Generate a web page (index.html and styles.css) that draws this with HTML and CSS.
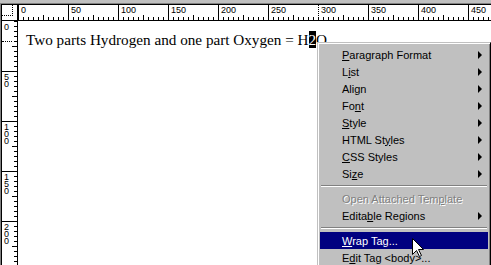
FILE: index.html
```html
<!DOCTYPE html>
<html>
<head>
  <title>Untitled Document</title>
  <link rel="stylesheet" href="styles.css">
</head>
<body>

  <div class="window">
    <div class="doc">
      <div class="client">

        <div class="hruler">
          <div class="corner"><span class="origin"></span></div>
          <div class="scale">
            <span class="major">0</span>
            <span class="major">50</span>
            <span class="major">100</span>
            <span class="major">150</span>
            <span class="major">200</span>
            <span class="major">250</span>
            <span class="major mark">300</span>
            <span class="major">350</span>
            <span class="major">400</span>
            <span class="major">450</span>
          </div>
        </div>

        <div class="main">
          <div class="vruler">
            <span class="vmajor"><span class="vlabel">0</span></span>
            <span class="vmajor"><span class="vlabel">50</span></span>
            <span class="vmajor"><span class="vlabel">100</span></span>
            <span class="vmajor"><span class="vlabel">150</span></span>
            <span class="vmajor"><span class="vlabel">200</span></span>
            <span class="vmark"></span>
          </div>
          <div class="page">
            <p class="line">Two parts Hydrogen and one part Oxygen = H<span class="sel">2</span>O</p>
          </div>
        </div>

      </div>
    </div>
  </div>

  <!-- context menu -->
  <div class="menu">
    <div class="item"><span class="label"><u>P</u>aragraph Format</span><span class="arrow"></span></div>
    <div class="item"><span class="label">L<u>i</u>st</span><span class="arrow"></span></div>
    <div class="item"><span class="label">Ali<u>g</u>n</span><span class="arrow"></span></div>
    <div class="item"><span class="label">Fo<u>n</u>t</span><span class="arrow"></span></div>
    <div class="item"><span class="label"><u>S</u>tyle</span><span class="arrow"></span></div>
    <div class="item"><span class="label">HTML St<u>y</u>les</span><span class="arrow"></span></div>
    <div class="item"><span class="label"><u>C</u>SS Styles</span><span class="arrow"></span></div>
    <div class="item"><span class="label">Si<u>z</u>e</span><span class="arrow"></span></div>
    <div class="sep"></div>
    <div class="item disabled"><span class="label">Open Attached Tem<u>p</u>late</span></div>
    <div class="item"><span class="label">Edita<u>b</u>le Regions</span><span class="arrow"></span></div>
    <div class="sep"></div>
    <div class="item active"><span class="label"><u>W</u>rap Tag...</span></div>
    <div class="item"><span class="label">E<u>d</u>it Tag &lt;body&gt;...</span></div>
  </div>

  <svg class="cursor" width="13" height="20" viewBox="0 0 13 20">
    <path d="M0.5 0.5 V16.5 L4.5 12.5 L7.5 18.5 L9.5 17.5 L6.5 11.5 H11.5 Z" fill="#fff" stroke="#000" stroke-width="1"/>
  </svg>

</body>
</html>
```

FILE: styles.css
```css
html, body {
  margin: 0;
  width: 491px;
  height: 265px;
  overflow: hidden;
}
body {
  position: relative;
  background-color: #c0c0c0;
}

.window {
  padding-top: 3px;
  height: 100%;
  box-sizing: border-box;
  background-color: #c0c0c0;
}
.doc {
  height: 100%;
  border: solid #808080;
  border-width: 1px 0 0 1px;
  box-sizing: border-box;
}
.client {
  height: 100%;
  border: solid #000;
  border-width: 1px 0 0 1px;
  box-sizing: border-box;
  display: flex;
  flex-direction: column;
  background-color: #fff;
}

/* rulers */
.hruler {
  display: flex;
  height: 15px;
  border-bottom: 1px solid #000;
  flex: none;
}
.corner {
  width: 15px;
  border-right: 1px solid #000;
  flex: none;
  background-color: #fff;
}
.origin {
  display: block;
  width: 10px;
  height: 10px;
  border-right: 1px dotted #000;
  border-bottom: 1px dotted #000;
}
.scale {
  flex: 1;
  display: flex;
  overflow: hidden;
  background:
    repeating-linear-gradient(to right, #000 0 1px, transparent 1px 5px) left bottom / 100% 3px no-repeat,
    repeating-linear-gradient(to right, transparent 0 25px, #000 25px 26px, transparent 26px 50px) left bottom / 100% 5px no-repeat,
    #fff;
}
.major {
  flex: none;
  width: 50px;
  height: 15px;
  box-sizing: border-box;
  border-left: 1px solid #000;
  padding: 1px 0 0 2px;
  font: 9px/9px "Liberation Sans", Arial, sans-serif;
  color: #000;
}
.major.mark {
  border-left-style: dotted;
}

.main {
  flex: 1;
  display: flex;
}
.vruler {
  position: relative;
  width: 15px;
  flex: none;
  border-right: 1px solid #000;
  background:
    repeating-linear-gradient(to bottom, #000 0 1px, transparent 1px 5px) right top / 3px 100% no-repeat,
    repeating-linear-gradient(to bottom, transparent 0 25px, #000 25px 26px, transparent 26px 50px) right top / 5px 100% no-repeat,
    #fff;
}
.vmajor {
  display: block;
  height: 50px;
  box-sizing: border-box;
  border-top: 1px solid #000;
  padding: 2px 0 0 2px;
}
.vmajor:first-child {
  border-top: none;
  padding-top: 3px;
}
.vlabel {
  display: block;
  width: 6px;
  word-break: break-all;
  font: 9px/7px "Liberation Sans", Arial, sans-serif;
  background-color: #fff;
}
.vmark {
  position: absolute;
  left: 0;
  top: 20px;
  width: 10px;
  border-top: 1px dotted #000;
}

.page {
  flex: 1;
  padding: 10px 8px 8px;
  background-color: #fff;
}
.line {
  margin: 0;
  font: 15.2px/17px "Liberation Serif", "Times New Roman", serif;
  color: #000;
  white-space: nowrap;
}
.sel {
  background-color: #000;
  color: #fff;
}

/* context menu */
.menu {
  position: absolute;
  left: 317px;
  top: 42px;
  width: 174px;
  box-sizing: border-box;
  padding: 3px 2px 2px;
  border: 1px solid;
  border-color: #c0c0c0 #000 #000 #c0c0c0;
  box-shadow: inset 1px 1px #fff, inset -1px -1px #808080;
  background-color: #c0c0c0;
  font: 11px "Liberation Sans", Arial, sans-serif;
  color: #000;
}
.item {
  display: flex;
  align-items: center;
  height: 17px;
  padding: 0 6px 0 22px;
  white-space: nowrap;
}
.item .label {
  flex: 1;
}
.item u {
  text-underline-offset: 1px;
}
.arrow {
  width: 0;
  height: 0;
  border-left: 4px solid #000;
  border-top: 4px solid transparent;
  border-bottom: 4px solid transparent;
}
.item.active {
  background-color: #000080;
  color: #fff;
}
.item.disabled {
  color: #808080;
  text-shadow: 1px 1px 0 #fff;
}
.sep {
  height: 8px;
  margin: 0 1px;
  display: flex;
  align-items: center;
}
.sep::before {
  content: "";
  flex: 1;
  border-top: 1px solid #808080;
  border-bottom: 1px solid #fff;
}

.cursor {
  position: absolute;
  left: 412px;
  top: 238px;
}
```
